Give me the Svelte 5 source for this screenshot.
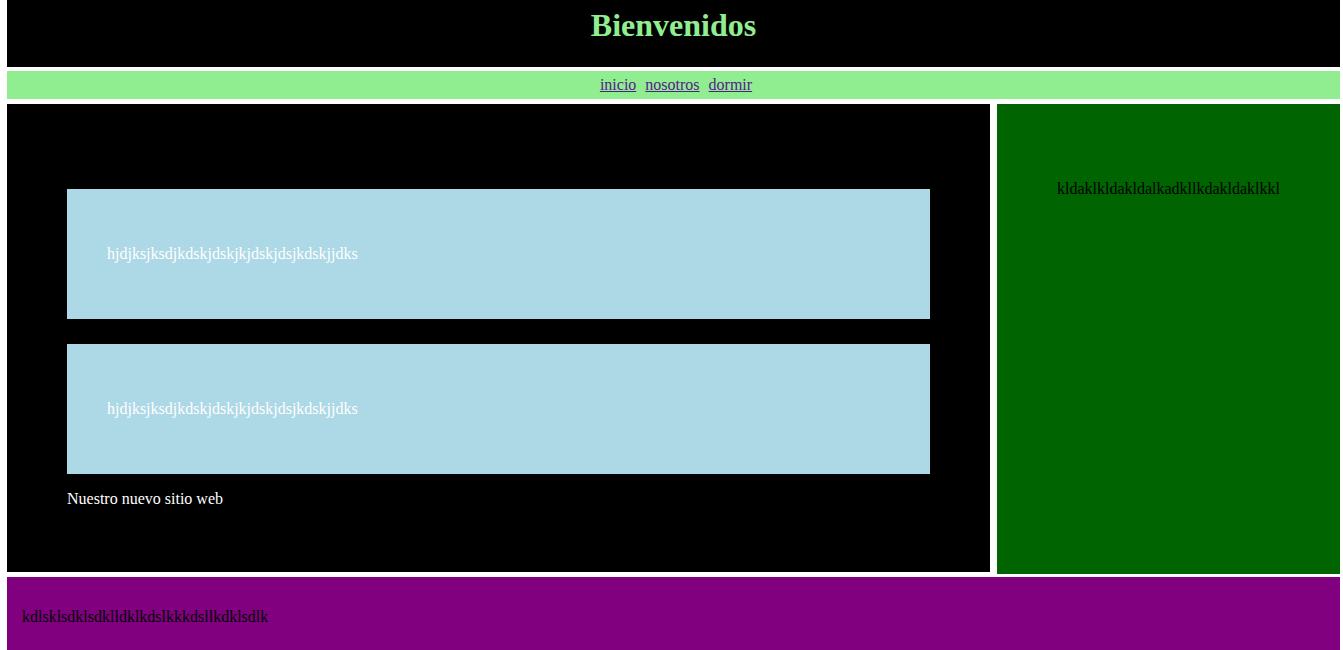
<script>
  const links = ['inicio', 'nosotros', 'dormir'];
  const articles = [
    'hjdjksjksdjkdskjdskjkjdskjdsjkdskjjdks',
    'hjdjksjksdjkdskjdskjkjdskjdsjkdskjjdks'
  ];
</script>

<div class="page">
  <header><h1>Bienvenidos</h1></header>
  <nav>
    {#each links as link}
      <a href="#{link}">{link}</a>
    {/each}
  </nav>
  <div class="columns">
    <main>
      {#each articles as text}
        <article><p>{text}</p></article>
      {/each}
      <p class="note">Nuestro nuevo sitio web</p>
    </main>
    <aside><p>kldaklkldakldalkadkllkdakldaklkkl</p></aside>
  </div>
  <footer><p>kdlsklsdklsdklldklkdslkkkdsllkdklsdlk</p></footer>
</div>

<style>
  :global(body) {
    margin: 0;
    background: white;
  }
  .page {
    display: flex;
    flex-direction: column;
    margin: 0 3px 0 7px;
    font: 16px/18px "Liberation Serif", "Times New Roman", serif;
  }
  p {
    margin: 0;
  }
  header {
    padding: 7px 0 23px;
    background: black;
    color: lightgreen;
    text-align: center;
  }
  h1 {
    margin: 0;
    font-size: 32px;
    line-height: 37px;
  }
  nav {
    display: flex;
    justify-content: center;
    gap: 9px;
    margin-top: 4px;
    padding: 5px 0 5px 5px;
    background: lightgreen;
  }
  a {
    color: #551a8b;
  }
  .columns {
    display: grid;
    grid-template-columns: 983fr 343fr;
    column-gap: 7px;
    margin-top: 5px;
  }
  main {
    display: flex;
    flex-direction: column;
    gap: 25px;
    margin-bottom: 2px;
    padding: 85px 60px 64px;
    background: black;
    color: white;
  }
  article {
    padding: 56px 40px;
    background: lightblue;
  }
  .note {
    margin-top: -9px;
  }
  aside {
    padding: 76px 60px;
    background: #006400;
    color: black;
  }
  footer {
    margin-top: 3px;
    padding: 31px 15px 24px;
    background: purple;
    color: black;
  }
</style>
